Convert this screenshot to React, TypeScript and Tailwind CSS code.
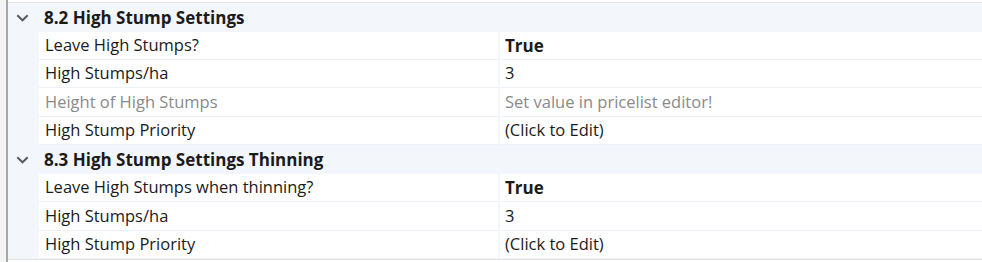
import React from "react";

const font = { fontFamily: '"Open Sans", "Noto Sans", sans-serif' };

type Row = { label: string; value: string; bold?: boolean; disabled?: boolean; h: string };

const sections: { title: string; h: string; rows: Row[] }[] = [
  {
    title: "8.2 High Stump Settings",
    h: "h-[29px]",
    rows: [
      { label: "Leave High Stumps?", value: "True", bold: true, h: "h-[28px]" },
      { label: "High Stumps/ha", value: "3", h: "h-[28px]" },
      { label: "Height of High Stumps", value: "Set value in pricelist editor!", disabled: true, h: "h-[29px]" },
      { label: "High Stump Priority", value: "(Click to Edit)", h: "h-[28px]" },
    ],
  },
  {
    title: "8.3 High Stump Settings Thinning",
    h: "h-[29px]",
    rows: [
      { label: "Leave High Stumps when thinning?", value: "True", bold: true, h: "h-[28px]" },
      { label: "High Stumps/ha", value: "3", h: "h-[29px]" },
      { label: "High Stump Priority", value: "(Click to Edit)", h: "h-[28px]" },
    ],
  },
];

function Chevron() {
  return (
    <svg width="13" height="8" viewBox="0 0 13 8" fill="none">
      <path d="M1.3 1.3 L6.5 6.3 L11.7 1.3" stroke="#5a5a5a" strokeWidth="2" />
    </svg>
  );
}

export default function App() {
  return (
    <div className="w-[982px] h-[262px] bg-white flex overflow-hidden text-[16.5px] leading-none text-[#1b1b1b]" style={font}>
      <div className="w-[6px] bg-[#f4f4f4]" />
      <div className="w-[2px] bg-[#a8a8a8]" />
      <div className="flex-1 flex flex-col">
        <div className="h-[2px] bg-white" />
        <div className="h-[1px] bg-[#e4e4e4]" />
        {sections.map((s) => (
          <div key={s.title} className="flex flex-col">
            <div className={`${s.h} bg-[#f3f6fb] flex items-center`}>
              <div className="w-[31px] flex items-center justify-center pr-[3px] pt-[1px]">
                <Chevron />
              </div>
              <span className="font-bold text-[17px] pl-[5px]">{s.title}</span>
            </div>
            {s.rows.map((r) => (
              <div key={r.label} className={`${r.h} bg-[#eef2f8] flex items-start`}>
                <div className="w-[31px] h-full bg-[#f3f6fb]" />
                <div
                  className={`w-[459px] h-[calc(100%-1px)] bg-white flex items-center pl-[6px] ${
                    r.disabled ? "text-[#8a8a8a]" : ""
                  }`}
                >
                  {r.label}
                </div>
                <div className="w-[2px] h-full bg-[#f3f6fb]" />
                <div
                  className={`flex-1 h-[calc(100%-1px)] bg-white flex items-center pl-[5px] ${
                    r.bold ? "font-bold text-[17px]" : ""
                  } ${r.disabled ? "text-[#8a8a8a]" : ""}`}
                >
                  {r.value}
                </div>
              </div>
            ))}
          </div>
        ))}
        <div className="h-[1px] bg-[#e4e4e4]" />
        <div className="flex-1 bg-white" />
      </div>
    </div>
  );
}
